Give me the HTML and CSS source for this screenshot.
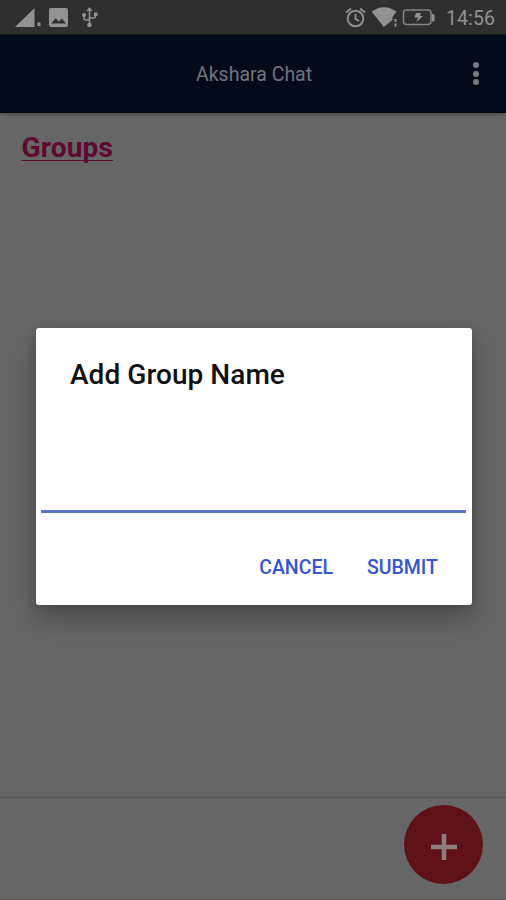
FILE: index.html
```
<!DOCTYPE html>
<html lang="en">
<head>
<meta charset="utf-8">
<title>Akshara Chat</title>
<link rel="stylesheet" href="styles.css">
</head>
<body>
<div class="screen">
  <div class="status">
    <svg class="status-icons" width="110" height="34" viewBox="0 0 110 34" fill="#929292">
      <path d="M15 27 34.500 8v19z"/><path d="M37.500 22.500h3V26h-3z"/>
      <path fill-rule="evenodd" d="M51 8h15q2 0 2 2v15q0 2-2 2H51q-2 0-2-2V10q0-2 2-2zm0 15.500h15l-4.200-5-3 3.200-3-3.500z"/>
      <path d="M89.500 11v13M84 15v3q0 2 2 2h3.500M95.500 14v2q0 2-2 2h-4" fill="none" stroke="#929292" stroke-width="1.500"/>
      <path d="m89.500 7 3 4h-6zM94 12.500h3.500V16H94z"/><circle cx="84" cy="15" r="2"/><circle cx="89.500" cy="25" r="2.300"/>
    </svg>
    <svg class="status-icons" width="96" height="34" viewBox="340 0 96 34" fill="#929292">
      <g fill="none" stroke="#929292" stroke-width="1.900"><circle cx="355.500" cy="18.500" r="7.800"/><path d="M355.500 14v5l3.500 2M346 12.500l5-4M365 12.500l-5-4"/></g>
      <path d="M371.500 11.500q12.500-8.500 25 0L392.500 17v3l-8.700 7z"/><path d="M394.500 19h2v3h-2zM394.500 23.500h2v3h-2z"/>
      <rect x="403.500" y="10" width="27.500" height="14.500" rx="3" fill="none" stroke="#858585" stroke-width="1.500"/>
      <path d="M432 14h1.200q1.300 0 1.300 1.500V20q0 1.500-1.300 1.500H432zM416 13h5l-1.200 3h3.200l-6.500 6 1.500-4.500h-3.500z"/>
    </svg>
    <span class="clock">14:56</span>
  </div>
  <header class="bar">
    <h1 class="bar-title">Akshara Chat</h1>
    <div class="menu"><i></i><i></i><i></i></div>
  </header>
  <main class="content"><h2 class="groups">Groups</h2></main>
  <footer class="footer">
    <div class="fab"><svg width="26" height="26" viewBox="0 0 26 26"><path d="M13 0v26M0 13h26" stroke="#8d7e7b" stroke-width="4.500"/></svg></div>
  </footer>
  <section class="dialog">
    <h2 class="dialog-title">Add Group Name</h2>
    <div class="field"></div>
    <div class="actions"><span class="cancel">CANCEL</span><span class="submit">SUBMIT</span></div>
  </section>
</div>
</body>
</html>
```
FILE: styles.css
```
* { box-sizing: border-box; margin: 0; }
body { font-family: Roboto, "Liberation Sans", sans-serif; }
.screen { position: relative; width: 506px; height: 900px; overflow: hidden; display: flex; flex-direction: column; background: #666; }
.status { height: 35px; background: #2f2f2f; display: flex; align-items: flex-start; justify-content: space-between; border-bottom: 1px solid #171a20; }
.status-icons:nth-child(2) { margin-left: 230px; }
.clock { flex: 1; padding-left: 10px; font-size: 19.5px; line-height: 37px; letter-spacing: .1px; color: #929292; white-space: nowrap; }
.bar { height: 78px; background: #030a1a; display: flex; justify-content: space-between; align-items: center; padding: 0 27px 0 196px; border-bottom: 1px solid #030712; box-shadow: 0 1px 4px rgba(0, 0, 0, .35); }
.bar-title { padding-top: 2px; font-size: 19.5px; font-weight: 400; line-height: 24px; color: #71747c; white-space: nowrap; }
.menu { display: flex; flex-direction: column; gap: 2.500px; }
.menu i { width: 6px; height: 6px; border-radius: 50%; background: #777a80; }
.content { flex: 1; padding: 17px 21.500px; }
.groups { display: inline-block; font-size: 28px; line-height: 36px; font-weight: 700; letter-spacing: .15px; color: #5d0930; text-decoration: underline; text-decoration-thickness: 1px; text-underline-offset: 3px; text-decoration-skip-ink: none; }
.footer { height: 103px; border-top: 1px solid #555; border-bottom: 1px solid #5b5b5b; display: flex; justify-content: flex-end; padding: 7px 23px 0 0; }
.fab { width: 79px; height: 79px; border-radius: 50%; background: #5e1218; display: flex; align-items: center; justify-content: center; padding-top: 5px; }
.dialog { position: absolute; left: 36px; top: 328px; width: 436px; height: 277px; border-radius: 3px; background: #fff; box-shadow: 0 14px 28px rgba(0, 0, 0, .26), 0 2px 10px rgba(0, 0, 0, .14); display: flex; flex-direction: column; }
.dialog-title { padding: 29px 0 0 34px; font-size: 28px; line-height: 36px; font-weight: 500; letter-spacing: .05px; color: #111; }
.field { height: 120px; margin: 0 6px 0 5px; border-bottom: 3px solid #5b73c5; }
.actions { display: flex; justify-content: flex-end; padding: 43px 34px 0 0; gap: 34px; font-size: 19.5px; line-height: 24px; font-weight: 500; color: #3454d6; }
```
